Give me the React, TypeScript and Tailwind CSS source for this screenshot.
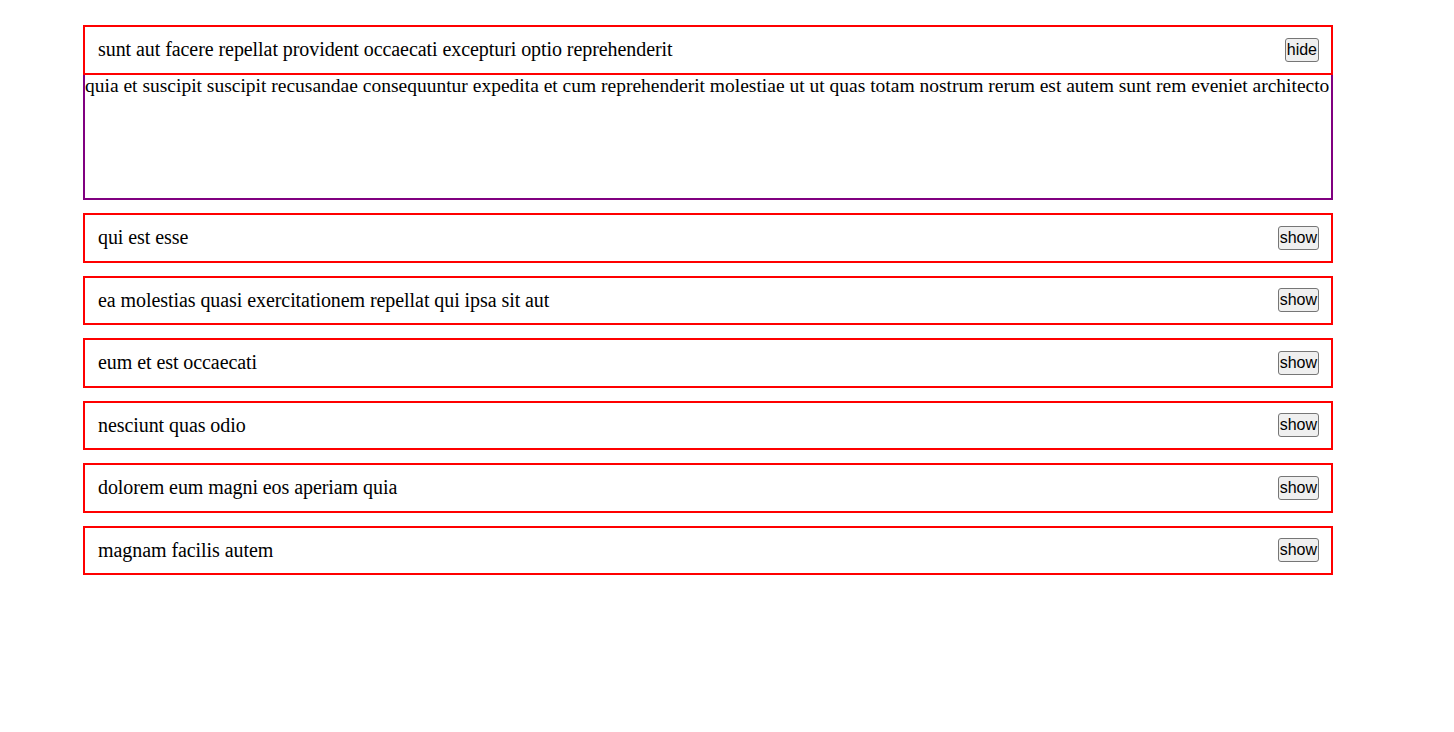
import React, { useState } from "react";

const posts = [
  {
    title: "sunt aut facere repellat provident occaecati excepturi optio reprehenderit",
    body: "quia et suscipit suscipit recusandae consequuntur expedita et cum reprehenderit molestiae ut ut quas totam nostrum rerum est autem sunt rem eveniet architecto",
  },
  { title: "qui est esse", body: "est rerum tempore vitae sequi sint nihil reprehenderit dolor beatae ea dolores neque" },
  { title: "ea molestias quasi exercitationem repellat qui ipsa sit aut", body: "et iusto sed quo iure voluptatem occaecati omnis eligendi aut ad" },
  { title: "eum et est occaecati", body: "ullam et saepe reiciendis voluptatem adipisci sit amet autem assumenda provident rerum culpa" },
  { title: "nesciunt quas odio", body: "repudiandae veniam quaerat sunt sed alias aut fugiat sit autem sed est" },
  { title: "dolorem eum magni eos aperiam quia", body: "ut aspernatur corporis harum nihil quis provident sequi mollitia nobis aliquid molestiae" },
  { title: "magnam facilis autem", body: "dolore placeat quibusdam ea quo vitae magni quis enim qui quis quo nemo aut saepe" },
];

function Item({ title, body, initial }: { title: string; body: string; initial: boolean }) {
  const [open, setOpen] = useState(initial);
  return (
    <div className="mb-[13px]">
      <div className="box-border h-[49.5px] border-2 border-[#ff0000] flex items-center justify-between pl-[13px] pr-[12px]">
        <span className="text-[20px] leading-[23px] tracking-[-0.07px] text-black">{title}</span>
        <button
          onClick={() => setOpen(!open)}
          className="box-border border border-[#767676] rounded-[3px] bg-[#efefef] px-[1px] py-[2px] text-[16px] leading-[18px] text-black font-['Liberation_Sans',Arial,sans-serif]"
        >
          {open ? "hide" : "show"}
        </button>
      </div>
      {open && (
        <div className="box-border h-[125.5px] border-2 border-t-0 border-[#800080] text-[19.5px] leading-[21px] text-black whitespace-nowrap overflow-visible">
          {body}
        </div>
      )}
    </div>
  );
}

export default function App() {
  return (
    <div className="min-h-[732px] bg-white font-['Liberation_Serif','Times_New_Roman',serif]">
      <div className="ml-[83px] w-[1250px] pt-[25px]">
        {posts.map((p, i) => (
          <Item key={i} title={p.title} body={p.body} initial={i === 0} />
        ))}
      </div>
    </div>
  );
}
